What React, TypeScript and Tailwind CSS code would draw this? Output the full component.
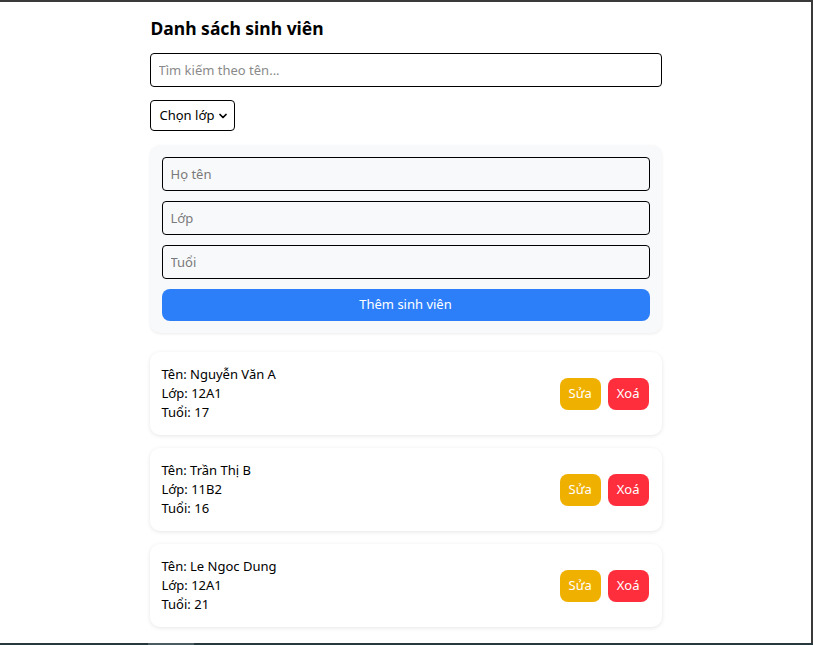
import { ChevronDown } from 'lucide-react'

type Student = { name: string; className: string; age: number }

const students: Student[] = [
  { name: 'Nguyễn Văn A', className: '12A1', age: 17 },
  { name: 'Trần Thị B', className: '11B2', age: 16 },
  { name: 'Le Ngoc Dung', className: '12A1', age: 21 },
]

const StudentCard = ({ s }: { s: Student }) => (
  <div className="bg-white rounded-[10px] shadow-[0_1px_4px_rgba(0,0,0,0.1)] px-3 py-[13px] flex items-center justify-between">
    <div className="text-[13px] leading-[19px] text-black">
      <div>Tên: {s.name}</div>
      <div>Lớp: {s.className}</div>
      <div>Tuổi: {s.age}</div>
    </div>
    <div className="flex gap-[7px] pr-px">
      <button className="h-8 px-[9px] rounded-lg bg-[#f0b000] text-white text-[13px]">Sửa</button>
      <button className="h-8 px-[9px] rounded-lg bg-[#ff2e3c] text-white text-[13px]">Xoá</button>
    </div>
  </div>
)

const App = () => {
  return (
    <div
      className="h-screen flex flex-col bg-white border-t-2 border-[#3a3a3a] overflow-hidden"
      style={{ fontFamily: '"Noto Sans", "Open Sans", sans-serif' }}
    >
      <div className="flex-1 flex overflow-hidden">
        <div className="flex-1 overflow-hidden">
          <div className="max-w-[512px] mx-auto pt-3">
            <h2 className="text-[17.5px] leading-7 font-bold text-black pl-px">Danh sách sinh viên</h2>
            <input
              placeholder="Tìm kiếm theo tên..."
              className="mt-[11px] w-full h-[34px] px-2 text-[13px] border border-black rounded bg-white placeholder:text-[#8a8a8a] outline-none"
            />
            <div className="mt-[13px] relative inline-flex items-center h-[31px] border border-black rounded pl-[9px] pr-[5px] bg-white">
              <span className="text-[13px] text-black">Chọn lớp</span>
              <ChevronDown size={12} strokeWidth={3.5} className="ml-[3px] text-black" />
            </div>
            <div className="mt-[14px] bg-[#f8f9fb] rounded-[10px] shadow-[0_1px_3px_rgba(0,0,0,0.08)] p-3 flex flex-col gap-[10px]">
              {['Họ tên', 'Lớp', 'Tuổi'].map((p) => (
                <input
                  key={p}
                  placeholder={p}
                  className="w-full h-[34px] px-2 text-[13px] border border-black rounded bg-transparent placeholder:text-[#7a7a7a] outline-none"
                />
              ))}
              <button className="w-full h-8 rounded-lg bg-[#2d7ff9] text-white text-[13px]">Thêm sinh viên</button>
            </div>
            <div className="mt-[19px] flex flex-col gap-[13px]">
              {students.map((s) => (
                <StudentCard key={s.name} s={s} />
              ))}
            </div>
          </div>
        </div>
        <div className="w-[2px] bg-[#3a3a3a]" />
      </div>
      <div className="h-[2px] flex bg-[#26383e]">
        <div className="w-[148px]" />
        <div className="w-[46px] bg-[#4b5b61]" />
      </div>
    </div>
  )
}

export default App
